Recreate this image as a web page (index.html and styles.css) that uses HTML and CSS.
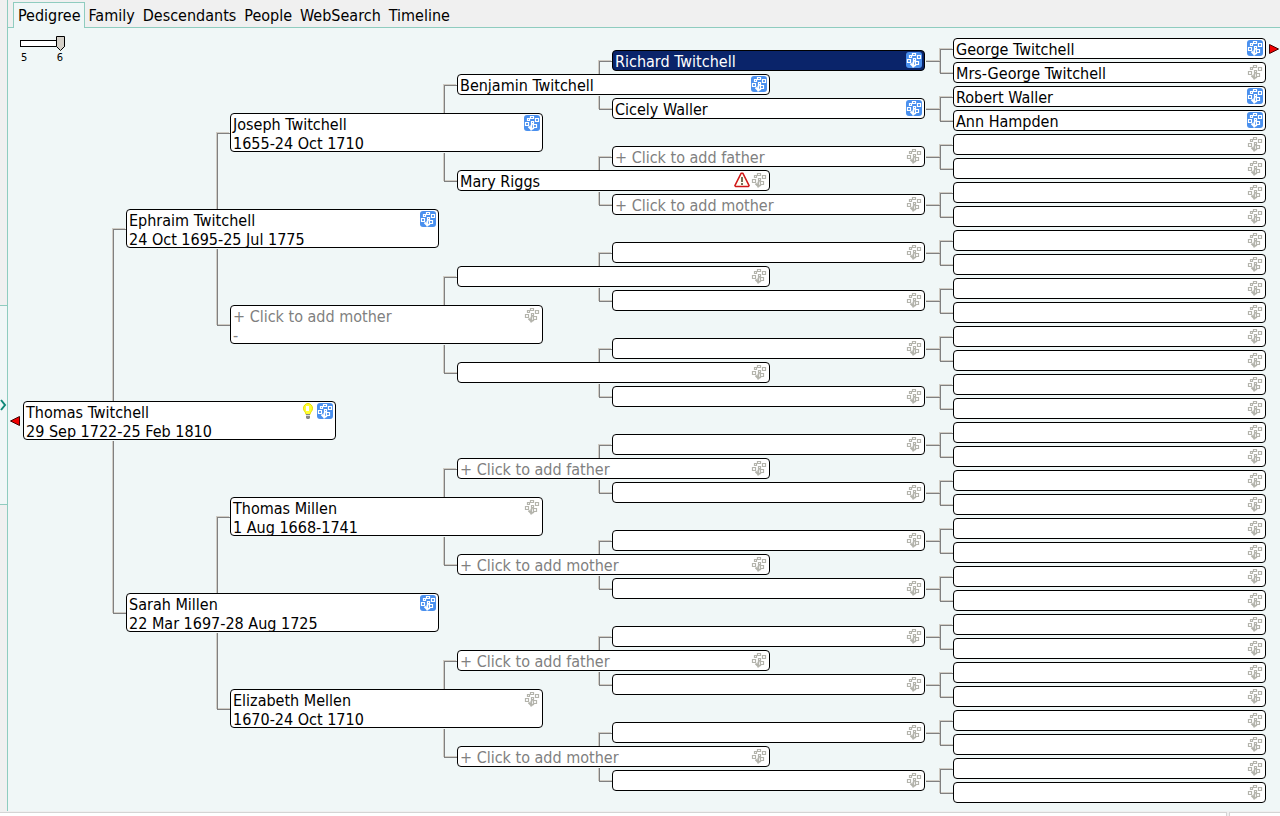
FILE: index.html
```html
<!DOCTYPE html>
<html lang="en">
<head>
<meta charset="utf-8">
<title>Pedigree</title>
<link rel="stylesheet" href="styles.css">
</head>
<body>
<svg class="defs" aria-hidden="true">
  <symbol id="tree" viewBox="0 0 16 16">
    <path fill="none" stroke="currentColor" stroke-width="1.200" d="M6.500 1.500h3v2h-3zM3.500 3.500h2v2h-2zM11.500 3.500h3v3h-3zM7.500 6.500h2v2h-2zM1.500 7.500h3v3h-3zM9.500 9.500h3v3h-3z"/>
    <path fill="none" stroke="currentColor" stroke-width="1.800" d="M4.500 11.500l2.500 2.500M7.200 15.500V11l1-2.500M7 14.500l3-1.500"/>
  </symbol>
  <symbol id="bulb" viewBox="0 0 12 16">
    <path fill="#ffff30" stroke="#e8dc00" d="M4 11.500C4 9 1.500 8.500 1.500 5.200a4.500 4.700 0 0 1 9 0c0 3.300-2.500 3.800-2.500 6.300z"/>
    <path fill="#fff" d="M4 3h3v5H4z"/>
    <path fill="#888" d="M4 11h4v4l-1 1H5l-1-1z"/>
    <path stroke="#ddd" d="M4 12.500h4"/>
  </symbol>
  <symbol id="warning" viewBox="0 0 16 16">
    <path fill="#fffff4" stroke="#d01818" stroke-width="1.500" stroke-linejoin="round" d="M7.200 1.200h1.600l6.300 12.500-.8.800H1.700l-.8-.8z"/>
    <path fill="#777058" d="M7 5h2v5H7zM7 11h2v2H7z"/>
  </symbol>
</svg>
<div class="app">
  <aside class="rail"><button class="expand" aria-label="Show panel"><svg viewBox="0 0 7 12"><path fill="none" stroke="#108878" stroke-width="2" d="M1 1l4 5-4 5"/></svg></button></aside>
  <main class="main">
    <nav class="tabs" role="tablist">
      <button class="tab active" role="tab" aria-selected="true">Pedigree</button>
      <button class="tab" role="tab">Family</button>
      <button class="tab" role="tab">Descendants</button>
      <button class="tab" role="tab">People</button>
      <button class="tab" role="tab">WebSearch</button>
      <button class="tab" role="tab">Timeline</button>
    </nav>
    <section class="canvas" id="canvas">
      <div class="generations">
        <input type="range" min="5" max="6" value="6" aria-label="Generations">
        <div class="scale"><span>5</span><span>6</span></div>
      </div>
      <button class="arrow child" aria-label="Children"><svg viewBox="0 0 10 10"><path fill="#f00000" stroke="#400" d="M.5 5l9-4.500v9z"/></svg></button>
      <button class="arrow parent" aria-label="Further ancestors"><svg viewBox="0 0 10 10"><path fill="#f00000" stroke="#400" d="M9.500 5l-9-4.500v9z"/></svg></button>
    </section>
  </main>
</div>
<footer class="status"><span class="cell wide"></span><span class="cell"></span></footer>
<script src="pedigree.js"></script>
</body>
</html>
```
FILE: styles.css
```css
* { box-sizing: border-box; }
body {
  margin: 0;
  min-height: 100vh;
  display: flex;
  flex-direction: column;
  background: #f0f0f0;
  color: #000;
  font: 16px/19px "DejaVu Sans Condensed", "DejaVu Sans", sans-serif;
}
button { font: inherit; color: inherit; border: 0; padding: 0; background: none; }
.defs { display: none; }
.app { flex: 1; display: flex; }
.rail {
  width: 8px;
  border-right: 1px solid #8fccbf;
  display: grid;
  grid-template-rows: 305px 200px 1fr;
}
.expand {
  grid-row: 2;
  display: flex;
  align-items: center;
  background: #f0f7f7;
  border: solid #8fccbf;
  border-width: 1px 0;
}
.expand svg { width: 7px; height: 12px; }
.main { flex: 1; display: flex; flex-direction: column; min-width: 0; }
.tabs {
  display: flex;
  height: 28px;
  padding: 2px 0 0 5px;
  border-bottom: 1px solid #8fccbf;
}
.tab { padding: 2px 4px 0; white-space: nowrap; }
.tab.active {
  padding: 0 3px 0 4px;
  margin-bottom: -1px;
  background: #f0f7f7;
  border: 1px solid #8fccbf;
  border-bottom: 0;
}
.canvas {
  position: relative;
  flex: 1;
  min-height: 783px;
  background: #f0f7f7;
  overflow: hidden;
}
.generations { width: 46px; margin: 8px 0 0 12px; font-size: 11px; line-height: 12px; }
.generations input {
  appearance: none;
  display: block;
  width: 45px;
  height: 15px;
  margin: 0;
  background: none;
}
.generations input::-webkit-slider-runnable-track {
  height: 7px;
  background: #fff;
  box-shadow: inset 0 0 0 1px #000;
}
.generations input::-webkit-slider-thumb {
  appearance: none;
  width: 9px;
  height: 15px;
  margin-top: -4px;
  background: url("data:image/svg+xml,%3Csvg xmlns='http://www.w3.org/2000/svg' viewBox='0 0 9 15'%3E%3Cpath fill='%23d4d0c8' stroke='%23000' d='M.5.5h8v10l-4 4-4-4z'/%3E%3C/svg%3E");
}
.scale { display: flex; justify-content: space-between; padding: 1px 3px 0 1px; }
.node {
  position: absolute;
  width: 313px;
  height: 21px;
  border: 1px solid #000;
  border-radius: 4px;
  background: #fff;
  box-shadow: 0 1px 0 #f0f7f7;
  padding: 0 2px;
  display: flex;
  text-align: left;
  white-space: nowrap;
}
.node.tall { height: 39px; }
.node.add { color: #808080; }
.node.selected { background: #0a246a; color: #fff; }
.label { flex: 1; padding-top: 1px; }
.line { display: block; }
.icon { width: 16px; height: 16px; margin-top: 1px; color: #b4b4ac; }
.icon.linked { color: #fff; background: #4a90ee; border-radius: 3px; }
.icon.warning { margin-right: 1px; }
.icon.bulb { width: 12px; margin-right: 3px; }
.branch {
  position: absolute;
  border: solid #808080;
  border-width: 1px 0 1px 1px;
  box-shadow: -1px -1px 0 #d0ccc4, inset 0 -1px 0 #d0ccc4;
}
.stub { position: absolute; width: 14px; height: 1px; background: #808080; box-shadow: 0 -1px 0 #d0ccc4; }
.arrow { position: absolute; width: 10px; height: 10px; }
.arrow svg { display: block; width: 10px; height: 10px; }
.arrow.child { left: 2px; top: 388px; }
.arrow.parent { left: 1261px; top: 16px; }
.status { height: 5px; display: flex; gap: 2px; padding-top: 1px; }
.cell { width: 51px; background: #fff; border: solid #d4d4d4; border-width: 1px 0 0 1px; }
.cell.wide { flex: 1; border-width: 1px 1px 0 0; }
```
FILE: pedigree.js
```js
const canvas = document.getElementById("canvas");
const FATHER = "+ Click to add father";
const MOTHER = "+ Click to add mother";

// One entry per generation: column position, first row, row spacing and people.
const generations = [
  { x: 15, y: 373, step: 0, tall: true, people: [
    { name: "Thomas Twitchell", dates: "29 Sep 1722-25 Feb 1810", linked: true, extra: "bulb" }] },
  { x: 118, y: 181, step: 384, tall: true, branch: 105, people: [
    { name: "Ephraim Twitchell", dates: "24 Oct 1695-25 Jul 1775", linked: true },
    { name: "Sarah Millen", dates: "22 Mar 1697-28 Aug 1725", linked: true }] },
  { x: 222, y: 85, step: 192, tall: true, branch: 209, people: [
    { name: "Joseph Twitchell", dates: "1655-24 Oct 1710", linked: true },
    { name: MOTHER, dates: "-" },
    { name: "Thomas Millen", dates: "1 Aug 1668-1741" },
    { name: "Elizabeth Mellen", dates: "1670-24 Oct 1710" }] },
  { x: 449, y: 46, step: 96, branch: 436, people: [
    { name: "Benjamin Twitchell", linked: true }, { name: "Mary Riggs", extra: "warning" }, {}, {},
    { name: FATHER }, { name: MOTHER }, { name: FATHER }, { name: MOTHER }] },
  { x: 604, y: 22, step: 48, branch: 591, people: [
    { name: "Richard Twitchell", linked: true, selected: true },
    { name: "Cicely Waller", linked: true },
    { name: FATHER }, { name: MOTHER }, ...Array(12).fill({})] },
  { x: 945, y: 10, step: 24, branch: 932, stub: true, people: [
    { name: "George Twitchell", linked: true }, { name: "Mrs-George Twitchell" },
    { name: "Robert Waller", linked: true }, { name: "Ann Hampden", linked: true },
    ...Array(28).fill({})] }
];

function place(className, box) {
  const el = document.createElement("div");
  el.className = className;
  for (const side in box) el.style[side] = box[side] + "px";
  canvas.append(el);
}

const icon = (id, cls) => `<svg class="icon ${cls}"><use href="#${id}"/></svg>`;

for (const g of generations) {
  if (!g.branch) continue;
  const middle = g.tall ? 20 : 11;
  for (let i = 0; i < g.people.length; i += 2) {
    const top = g.y + g.step * i + middle;
    place("branch", { left: g.branch, top, width: g.x - g.branch, height: g.step + 1 });
    if (g.stub) place("stub", { left: g.branch - 14, top: top + g.step / 2 });
  }
}

for (const g of generations) {
  g.people.forEach((p, i) => {
    const node = document.createElement("button");
    node.className = "node";
    if (g.tall) node.classList.add("tall");
    if (p.selected) node.classList.add("selected");
    if (p.name && p.name.startsWith("+")) node.classList.add("add");
    node.style.left = g.x + "px";
    node.style.top = g.y + g.step * i + "px";
    node.innerHTML =
      `<span class="label"><span class="line">${p.name || ""}</span>` +
      (p.dates ? `<span class="line">${p.dates}</span>` : "") + "</span>" +
      (p.extra ? icon(p.extra, p.extra) : "") +
      icon("tree", p.linked ? "linked" : "");
    if (!p.name) node.setAttribute("aria-label", "Empty ancestor");
    canvas.append(node);
  });
}
```
